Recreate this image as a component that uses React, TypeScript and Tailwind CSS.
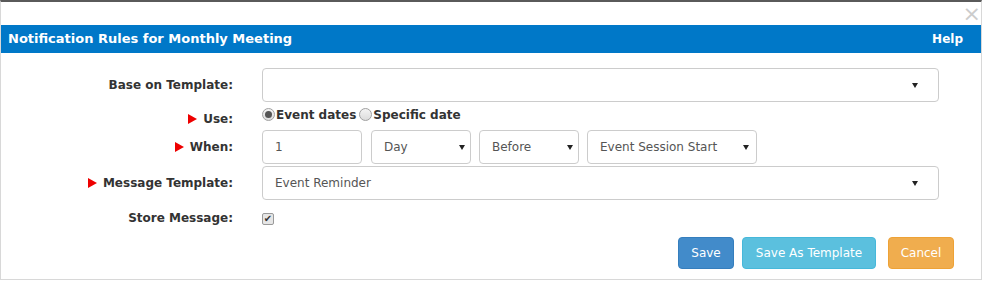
import React from "react";

const Tri = () => (
  <svg width="9" height="10" viewBox="0 0 9 10" className="mr-[6px] shrink-0">
    <polygon points="0,0 9,5 0,10" fill="#ee0000" />
  </svg>
);

const Caret = () => (
  <svg width="6" height="5" viewBox="0 0 6 5" className="shrink-0">
    <polygon points="0,0 6,0 3,5" fill="#222" />
  </svg>
);

const Select = ({ label, className }: { label: string; className: string }) => (
  <div
    className={`flex h-[34px] items-center justify-between rounded-[4px] border border-[#cccccc] bg-white pl-[12px] text-[12px] text-[#555555] ${className}`}
  >
    <span>{label}</span>
    <Caret />
  </div>
);

const Radio = ({ checked }: { checked?: boolean }) => (
  <span className="mr-[1px] inline-flex h-[13px] w-[13px] items-center justify-center rounded-full border border-[#a0a0a0] bg-gradient-to-b from-[#f4f4f4] to-[#dcdcdc]">
    {checked && <span className="h-[7px] w-[7px] rounded-full bg-[#555555]" />}
  </span>
);

export default function App() {
  return (
    <div
      className="relative h-[281px] w-[983px] overflow-hidden bg-white"
      style={{ fontFamily: '"DejaVu Sans", Verdana, sans-serif' }}
    >
      <div className="flex h-[280px] w-[982px] flex-col border-x border-b border-t-2 border-x-[#d8d8d8] border-b-[#d8d8d8] border-t-[#5a5a5a]">
        <div className="relative h-[23px]">
          <span className="absolute right-[0px] top-[1px] text-[22px] leading-[22px] text-[#cccccc]">×</span>
        </div>
        <div className="flex h-[28px] items-center justify-between bg-[#0078c8] pl-[7px] pr-[18px] text-white">
          <span className="text-[13px] font-bold">Notification Rules for Monthly Meeting</span>
          <span className="text-[12px] font-bold">Help</span>
        </div>
        <div className="flex flex-col pt-[15px] text-[12px] text-[#333333]">
          <div className="flex h-[34px] items-center">
            <div className="flex w-[232px] justify-end font-bold">Base on Template:</div>
            <Select label="" className="ml-[29px] w-[677px] pr-[20px]" />
          </div>
          <div className="mt-[2px] flex h-[20px]">
            <div className="flex w-[232px] items-center justify-end pt-[9px] font-bold">
              <Tri />
              Use:
            </div>
            <div className="ml-[29px] flex items-center pt-[1px] text-[12px] font-bold">
              <Radio checked />
              <span className="mr-[3px]">Event dates</span>
              <Radio />
              <span>Specific date</span>
            </div>
          </div>
          <div className="mt-[6px] flex h-[34px] items-center">
            <div className="flex w-[232px] items-center justify-end font-bold">
              <Tri />
              When:
            </div>
            <div className="ml-[29px] flex gap-[8px]">
              <div className="flex h-[34px] w-[100px] items-center rounded-[4px] border border-[#cccccc] pl-[12px] text-[12px] text-[#555555]">
                1
              </div>
              <Select label="Day" className="ml-[1px] w-[100px] pr-[5px]" />
              <Select label="Before" className="w-[100px] pr-[5px]" />
              <Select label="Event Session Start" className="w-[170px] pr-[7px]" />
            </div>
          </div>
          <div className="mt-[2px] flex h-[34px] items-center">
            <div className="flex w-[232px] items-center justify-end font-bold">
              <Tri />
              Message Template:
            </div>
            <Select label="Event Reminder" className="ml-[29px] w-[677px] pr-[20px]" />
          </div>
          <div className="mt-[6px] flex h-[24px] items-center">
            <div className="flex w-[232px] justify-end font-bold">Store Message:</div>
            <span className="ml-[29px] mt-[2px] flex h-[12px] w-[12px] items-center justify-center rounded-[2px] border border-[#9a9a9a] bg-[#e6e6e6] text-[10px] leading-none text-[#333333]">
              ✔
            </span>
          </div>
          <div className="mt-[7px] flex h-[32px] items-center justify-end pr-[27px] text-[12px] text-white">
            <div className="flex h-[32px] w-[56px] items-center justify-center rounded-[4px] border border-[#357ebd] bg-[#428bca]">
              Save
            </div>
            <div className="ml-[8px] flex h-[32px] w-[134px] items-center justify-center rounded-[4px] border border-[#46b8da] bg-[#5bc0de]">
              Save As Template
            </div>
            <div className="ml-[12px] flex h-[32px] w-[66px] items-center justify-center rounded-[4px] border border-[#eea236] bg-[#f0ad4e]">
              Cancel
            </div>
          </div>
        </div>
      </div>
    </div>
  );
}
